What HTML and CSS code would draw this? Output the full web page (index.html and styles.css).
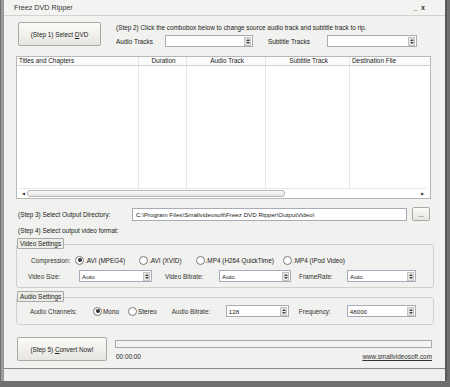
FILE: index.html
```html
<!DOCTYPE html>
<html lang="en">
<head>
    <meta charset="UTF-8">
    <title>Freez DVD Ripper</title>
    <link rel="stylesheet" href="styles.css">
</head>
<body>
<div class="window">
    <div class="titlebar">
        <span class="title">Freez DVD Ripper</span>
        <span class="controls">_&nbsp;&nbsp;x</span>
    </div>

    <div class="content">
        <div class="top">
            <button class="btn step1">(Step 1) Select <u>D</u>VD</button>
            <div class="step2">
                <p>(Step 2) Click the combobox below to change source audio track and subtitle track to rip.</p>
                <div class="tracks">
                    <span class="lbl-audio">Audio Tracks</span>
                    <div class="combo w-audio"><span></span><i class="arrow"></i></div>
                    <span class="lbl-sub">Subtitle Tracks</span>
                    <div class="combo w-sub"><span></span><i class="arrow"></i></div>
                </div>
            </div>
        </div>

        <div class="list">
            <div class="list-head">
                <span class="col c1">Titles and Chapters</span>
                <span class="col c2 center">Duration</span>
                <span class="col c3 center">Audio Track</span>
                <span class="col c4 center">Subtitle Track</span>
                <span class="col c5">Destination File</span>
            </div>
            <div class="list-body">
                <span class="col c1"></span>
                <span class="col c2"></span>
                <span class="col c3"></span>
                <span class="col c4"></span>
                <span class="col c5"></span>
            </div>
            <div class="hscroll">
                <span class="sarrow">&#9664;</span>
                <span class="thumb"></span>
                <span class="track"></span>
                <span class="sarrow">&#9654;</span>
            </div>
        </div>

        <div class="outdir">
            <span class="outdir-label">(Step 3) Select Output Directory:</span>
            <div class="textbox">C:\Program Files\Smallvideosoft\Freez DVD Ripper\OutputVideo\</div>
            <button class="btn browse">...</button>
        </div>

        <p class="step4">(Step 4) Select output video format:</p>

        <div class="group video">
            <span class="legend">Video Settings</span>
            <div class="row">
                <span class="lbl lbl-comp">Compression:</span>
                <label class="radio on"><i></i>.AVI (MPEG4)</label>
                <label class="radio"><i></i>.AVI (XVID)</label>
                <label class="radio"><i></i>.MP4 (H264 QuickTime)</label>
                <label class="radio"><i></i>.MP4 (IPod Video)</label>
            </div>
            <div class="row">
                <span class="lbl lbl-size">Video Size:</span>
                <div class="combo w-size"><span>Auto</span><i class="arrow"></i></div>
                <span class="lbl lbl-vbr">Video Bitrate:</span>
                <div class="combo w-vbr"><span>Auto</span><i class="arrow"></i></div>
                <span class="lbl lbl-fr">FrameRate:</span>
                <div class="combo w-fr"><span>Auto</span><i class="arrow"></i></div>
            </div>
        </div>

        <div class="group audio">
            <span class="legend">Audio Settings</span>
            <div class="row">
                <span class="lbl lbl-ch">Audio Channels:</span>
                <label class="radio on"><i></i>Mono</label>
                <label class="radio"><i></i>Stereo</label>
                <span class="lbl lbl-abr">Audio Bitrate:</span>
                <div class="combo w-abr"><span>128</span><i class="arrow"></i></div>
                <span class="lbl lbl-freq">Frequency:</span>
                <div class="combo w-fr"><span>48000</span><i class="arrow"></i></div>
            </div>
        </div>

        <div class="bottom">
            <button class="btn step5">(Step 5) <u>C</u>onvert Now!</button>
            <div class="progress-area">
                <div class="progress"></div>
                <div class="progress-info">
                    <span>00:00:00</span>
                    <span class="link">www.smallvideosoft.com</span>
                </div>
            </div>
        </div>
    </div>

    <div class="statusbar"></div>
</div>
</body>
</html>
```

FILE: styles.css
```css
* {
    box-sizing: border-box;
    margin: 0;
    padding: 0;
}

body {
    width: 450px;
    height: 387px;
    overflow: hidden;
    background: #6f6f6f;
    font-family: 'Liberation Sans', Arial, sans-serif;
    font-size: 6.4px;
    color: #222;
}

.window {
    width: 446px;
    height: 381px;
    margin-left: 1px;
    background: #f1f1ef;
    border-left: 3px solid #9a9a9a;
    border-right: 2px solid #5a5a5a;
    display: flex;
    flex-direction: column;
}

.titlebar {
    height: 16px;
    display: flex;
    align-items: center;
    justify-content: space-between;
    padding: 0 20px 0 10px;
    border-bottom: 1px solid #d2d2d0;
    background: #f3f3f1;
    font-size: 7.2px;
    color: #333;
}

.controls {
    font-weight: bold;
    font-size: 7px;
}

.content {
    flex: 1;
    padding: 6px 13px 0 12px;
    display: flex;
    flex-direction: column;
}

.btn {
    font-family: inherit;
    font-size: 6.4px;
    color: #222;
    background: linear-gradient(#fbfbfa, #e6e5e0);
    border: 1px solid #a9a9a6;
    border-radius: 2px;
    cursor: default;
}

.top {
    display: flex;
    align-items: flex-start;
}

.step1 {
    width: 83px;
    height: 24px;
    margin-left: 2px;
}

.step2 {
    margin-left: 15px;
    padding-top: 2px;
}

.tracks {
    display: flex;
    align-items: center;
    margin-top: 4px;
}

.lbl-sub {
    margin-left: 15px;
}

.combo {
    height: 12px;
    background: #fff;
    border: 1px solid #a5acb5;
    display: flex;
    align-items: center;
    justify-content: space-between;
    padding-left: 2px;
    font-size: 6.2px;
}

.arrow {
    width: 7px;
    height: 9px;
    margin-right: 1px;
    background: #e4e4e2;
    border: 1px solid #c3c3c1;
    position: relative;
}

.arrow::before,
.arrow::after {
    content: "";
    position: absolute;
    left: 1px;
    border-left: 2px solid transparent;
    border-right: 2px solid transparent;
}

.arrow::before {
    top: 1px;
    border-bottom: 2px solid #444;
}

.arrow::after {
    bottom: 1px;
    border-top: 2px solid #444;
}

.w-audio {
    width: 88px;
    margin-left: 12px;
}

.w-sub {
    width: 90px;
    margin-left: 17px;
}

.list {
    margin-top: 9px;
    width: 415px;
    height: 143px;
    background: #fff;
    border: 1px solid #b8b8b6;
    display: flex;
    flex-direction: column;
}

.list-head,
.list-body {
    display: flex;
}

.list-head {
    height: 9px;
    border-bottom: 1px solid #d0d0ce;
    background: #fbfbfb;
}

.list-head .col {
    line-height: 8px;
    padding-left: 2px;
}

.list-body {
    flex: 1;
}

.col {
    border-right: 1px solid #e6e6e4;
}

.center {
    text-align: center;
}

.c1 { width: 122px; }
.c2 { width: 48px; }
.c3 { width: 79px; }
.c4 { width: 84px; }
.c5 { width: 80px; border-right: none; }

.hscroll {
    height: 9px;
    margin: 0 4px 1px 2px;
    display: flex;
    align-items: center;
    border-top: 1px solid #e8e8e8;
}

.sarrow {
    font-size: 4px;
    width: 8px;
    text-align: center;
    color: #333;
}

.thumb {
    width: 258px;
    height: 7px;
    background: linear-gradient(#fafafa, #e4e4e2);
    border: 1px solid #b7b7b5;
    border-radius: 3px;
}

.track {
    flex: 1;
}

.outdir {
    display: flex;
    align-items: center;
    margin-top: 8px;
    padding-left: 2px;
}

.outdir-label {
    width: 114px;
}

.textbox {
    width: 275px;
    height: 13px;
    background: #fff;
    border: 1px solid #a5acb5;
    padding-left: 3px;
    line-height: 11px;
    font-size: 6.2px;
}

.browse {
    width: 18px;
    height: 14px;
    margin-left: 5px;
}

.step4 {
    margin-top: 6px;
    padding-left: 2px;
}

.group {
    position: relative;
    margin-top: 10px;
    width: 418px;
    border: 1px solid #cfcfcd;
    border-radius: 3px;
    padding: 6px 0 4px 0;
}

.legend {
    position: absolute;
    top: -7px;
    left: 0;
    height: 11px;
    line-height: 10px;
    padding: 0 2px;
    background: #ecece8;
    border: 1px solid #a8a8a6;
    border-radius: 1px;
}

.row {
    display: flex;
    align-items: center;
    height: 14px;
    margin-top: 2px;
}

.lbl {
    color: #333;
}

.lbl-comp { margin-left: 14px; width: 44px; }
.lbl-size { margin-left: 11px; width: 51px; }
.lbl-vbr { margin-left: 13px; width: 54px; }
.lbl-fr { margin-left: 8px; width: 48px; }
.lbl-ch { margin-left: 13px; width: 63px; }
.lbl-abr { margin-left: 15px; width: 54px; }
.lbl-freq { margin-left: 10px; width: 48px; }

.radio {
    display: flex;
    align-items: center;
}

.radio i {
    width: 9px;
    height: 9px;
    border: 1px solid #7a7a7a;
    border-radius: 50%;
    background: #fff;
    margin-right: 1px;
    display: flex;
    align-items: center;
    justify-content: center;
}

.radio.on i::after {
    content: "";
    width: 4px;
    height: 4px;
    border-radius: 50%;
    background: #333;
}

.video .radio:nth-of-type(1) { margin-right: 14px; }
.video .radio:nth-of-type(2) { margin-right: 14px; }
.video .radio:nth-of-type(3) { margin-right: 9px; }
.audio .radio:nth-of-type(1) { margin-right: 9px; }

.w-size { width: 73px; }
.w-vbr { width: 72px; }
.w-fr { width: 69px; }
.w-abr { width: 63px; }

.group.audio {
    margin-top: 9px;
    padding: 4px 0 6px 0;
}

.bottom {
    display: flex;
    margin-top: 12px;
}

.step5 {
    width: 90px;
    height: 24px;
    margin-left: 1px;
}

.progress-area {
    margin-left: 8px;
    margin-top: 3px;
    width: 317px;
}

.progress {
    height: 8px;
    background: #f4f4f2;
    border: 1px solid #a8a8a6;
}

.progress-info {
    display: flex;
    justify-content: space-between;
    margin-top: 5px;
    padding-left: 1px;
}

.link {
    text-decoration: underline;
    color: #333;
}

.statusbar {
    height: 13px;
    border-top: 1px solid #8a8a8a;
    background: #efefed;
}
```
